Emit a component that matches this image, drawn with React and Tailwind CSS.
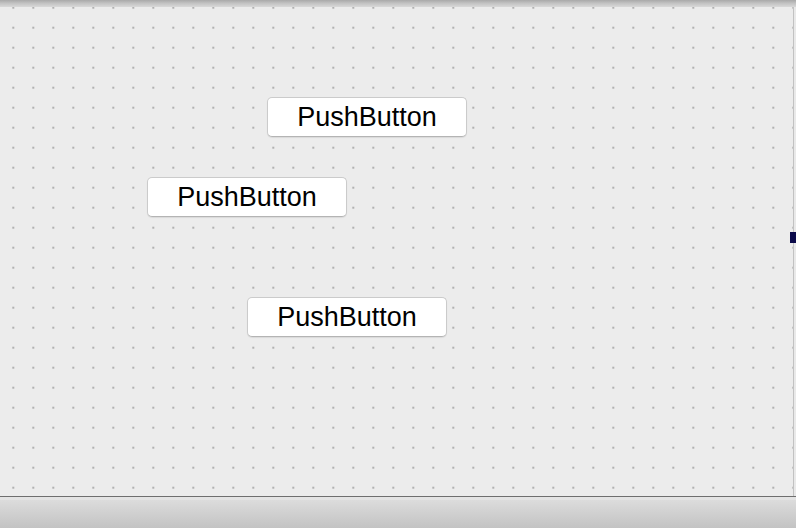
const buttons = [
  { id: 1, pos: "left-[267px] top-[90px]" },
  { id: 2, pos: "left-[147px] top-[170px]" },
  { id: 3, pos: "left-[247px] top-[290px]" },
];

const PushButton = ({ pos }) => (
  <button
    className={`absolute ${pos} w-[200px] h-[40px] rounded-[5px] bg-white border border-[#cbcbcb] border-b-[#b4b4b4] shadow-[0_1px_1px_rgba(0,0,0,0.08)] flex items-center justify-center text-[27px] leading-none text-black font-['Liberation_Sans',Arial,sans-serif]`}
  >
    PushButton
  </button>
);

export default function App() {
  return (
    <div className="w-[796px] h-[528px] flex flex-col bg-[#ececec] overflow-hidden">
      {/* top strip */}
      <div className="h-[7px] bg-gradient-to-b from-[#a9a9a9] via-[#c4c4c4] to-[#d9d9d9]" />

      <div className="flex-1 flex relative">
        {/* form canvas */}
        <div className="flex-1 relative bg-[#ececec] bg-[radial-gradient(circle_at_center,#9c9c9c_0,#b4b4b4_0.8px,transparent_1.6px)] bg-[length:20px_20px] bg-[position:3.3px_-9.3px]">
          {buttons.map((b) => (
            <PushButton key={b.id} pos={b.pos} />
          ))}
        </div>
        <div className="w-px bg-[#c2c2c2]" />
        <div className="w-[2px] bg-[#e9e9e9]" />

        {/* selection handle */}
        <div className="absolute right-0 top-[225px] w-[6px] h-[11px] bg-[#0b0a4a]" />
      </div>

      {/* bottom bar */}
      <div className="h-[32px] border-t border-[#6f6f6f] flex flex-col">
        <div className="h-[3px] bg-[#e4e4e4]" />
        <div className="flex-1 bg-gradient-to-b from-[#dcdcdc] to-[#c3c3c3]" />
      </div>
    </div>
  );
}
